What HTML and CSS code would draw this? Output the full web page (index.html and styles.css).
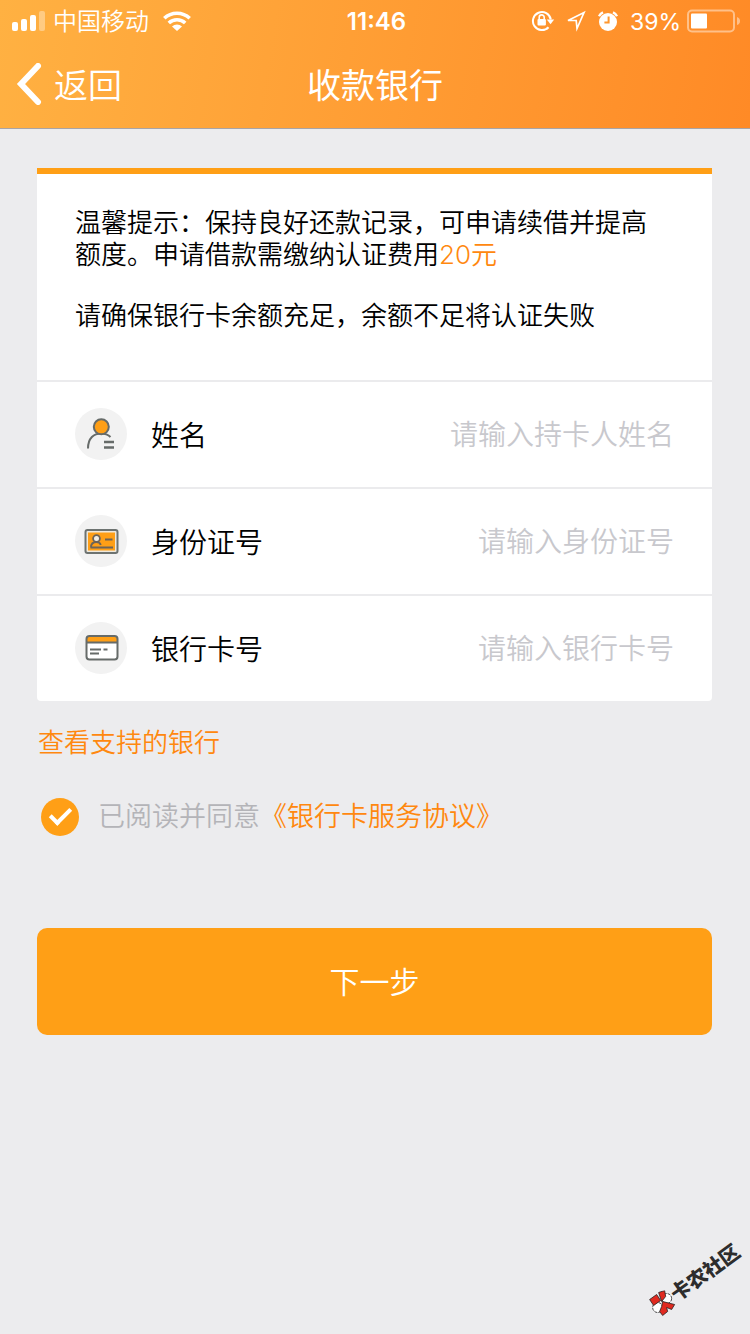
FILE: index.html
```html
<!DOCTYPE html>
<html lang="zh-CN">
<head>
<meta charset="utf-8">
<meta name="viewport" content="width=device-width, initial-scale=1">
<title>收款银行</title>
<link rel="stylesheet" href="styles.css">
</head>
<body>
<div class="page">
  <header class="header">
    <div class="status">
      <div class="status-left">
        <svg width="34" height="22" viewBox="0 0 34 22" fill="#fff" aria-hidden="true"><rect x="0" y="12" width="6" height="9" rx="2"/><rect x="9" y="9" width="6" height="12" rx="2"/><rect x="18" y="5" width="6" height="16" rx="2"/><rect x="27" y="1" width="6" height="20" rx="2" opacity=".35"/></svg>
        <span class="carrier">中国移动</span>
        <svg class="wifi" width="28" height="22" viewBox="0 0 28 22" aria-hidden="true"><g fill="none" stroke="#fff" stroke-width="3.6"><path d="M1.3 8.3a18.5 18.5 0 0 1 25.4 0"/><path d="M5.8 13a12 12 0 0 1 16.4 0"/></g><path d="M9 16.4a7.2 7.2 0 0 1 10 0L14 21z" fill="#fff"/></svg>
      </div>
      <span class="time">11:46</span>
      <div class="status-right">
        <svg width="24" height="22" viewBox="0 0 24 22" aria-hidden="true"><path d="M19.8 9.5A9 9 0 1 0 17.5 17.2" fill="none" stroke="#fff" stroke-width="2"/><path d="M15.8 9.6h7.4l-3.7 4.6z" fill="#fff"/><rect x="6.5" y="9" width="8.4" height="6.6" rx="1" fill="#fff"/><path d="M8.2 9V7.4a2.500 2.500 0 0 1 5 0V9" fill="none" stroke="#fff" stroke-width="1.6"/></svg>
        <svg width="20" height="22" viewBox="0 0 20 22" aria-hidden="true"><path d="M2 10.500L18 2.500l-7 16-.8-8z" fill="none" stroke="#fff" stroke-width="1.7"/></svg>
        <svg width="22" height="22" viewBox="0 0 22 22" aria-hidden="true"><circle cx="11" cy="12" r="9" fill="#fff"/><path d="M2 6.200A9 9 0 0 1 6 2.400M16 2.400a9 9 0 0 1 4 3.800" fill="none" stroke="#fff" stroke-width="2.400"/><path d="M11.600 6.500v6H7.400" fill="none" stroke="#ff972e" stroke-width="2"/></svg>
        <span class="percent">39%</span>
        <svg class="battery" width="54" height="24" viewBox="0 0 54 24" aria-hidden="true"><rect x="1" y="1.5" width="46" height="21" rx="4" fill="none" stroke="#fff" stroke-opacity=".45" stroke-width="2"/><rect x="4" y="4.500" width="16" height="15" rx="1" fill="#fff"/><path d="M50 8q3 1 3 4t-3 4z" fill="#fff" opacity=".45"/></svg>
      </div>
    </div>
    <nav class="nav">
      <button class="back" type="button"><svg width="26" height="42" viewBox="0 0 26 42" aria-hidden="true"><path d="M22 3L5 21l17 18" fill="none" stroke="#fff" stroke-width="6" stroke-linecap="round"/></svg><span>返回</span></button>
      <h1 class="title">收款银行</h1>
    </nav>
  </header>

  <main class="main">
    <form>
      <section class="card">
        <div class="notice">
          <p>温馨提示：保持良好还款记录，可申请续借并提高<br>额度。申请借款需缴纳认证费用<span class="fee">20元</span></p>
          <p>请确保银行卡余额充足，余额不足将认证失败</p>
        </div>
        <div class="field">
          <svg class="field-icon" viewBox="0 0 52 52" aria-hidden="true"><circle cx="26" cy="26" r="26" fill="#f2f2f2"/><g fill="none" stroke="#666b69" stroke-width="2"><path d="M13 40.500C13 30 19 25.500 26 25.500c4 0 7 1 9.500 3.500"/><circle cx="26.300" cy="18.800" r="7.500" fill="#ff9f16"/><path d="M29 34h10M29 39.500h10" stroke-width="2.400"/></g></svg>
          <label for="name">姓名</label>
          <input id="name" type="text" placeholder="请输入持卡人姓名">
        </div>
        <div class="field">
          <svg class="field-icon" viewBox="0 0 52 52" aria-hidden="true"><circle cx="26" cy="26" r="26" fill="#f2f2f2"/><rect x="10.500" y="15" width="32" height="23" rx="2" fill="#eee8dc" stroke="#6d7371" stroke-width="2"/><rect x="13" y="17.500" width="27" height="18" fill="#ff9f16"/><g fill="none" stroke="#6d6458" stroke-width="1.800"><circle cx="21.500" cy="23.500" r="3.400" fill="#f2eee6"/><path d="M16 32.500c0-3.500 2-5.500 5.500-5.500 2.500 0 3.800 1.500 4.300 3M15.500 32.500H38M30 24.500h7.500"/></g></svg>
          <label for="idno">身份证号</label>
          <input id="idno" type="text" placeholder="请输入身份证号">
        </div>
        <div class="field">
          <svg class="field-icon" viewBox="0 0 52 52" aria-hidden="true"><circle cx="26" cy="26" r="26" fill="#f2f2f2"/><rect x="11.500" y="14" width="31" height="23.500" rx="3" fill="#fff"/><path d="M12 20v-3q0-3 3-3h24q3 0 3 3v3z" fill="#ff9f16"/><g fill="none" stroke="#666b69" stroke-width="2"><rect x="11.500" y="14" width="31" height="23.500" rx="3"/><path d="M12 20.500h30M15 27.500h11M28.500 27.500h4M15 31.500h9"/></g></svg>
          <label for="cardno">银行卡号</label>
          <input id="cardno" type="text" placeholder="请输入银行卡号">
        </div>
      </section>
      <a class="banks" href="#">查看支持的银行</a>
      <div class="agree">
        <input class="check" id="agree" type="checkbox" checked>
        <label for="agree">已阅读并同意</label><a href="#">《银行卡服务协议》</a>
      </div>
      <button class="next" type="submit">下一步</button>
    </form>
  </main>

  <div class="watermark">
    <svg width="28" height="28" viewBox="0 3 28 28" aria-hidden="true"><g stroke="#222" stroke-width=".8"><g fill="#fff" stroke-dasharray="3 1"><circle cx="19" cy="11" r="5"/><circle cx="10" cy="20" r="5"/></g><path d="M2 12l7-5 4 6-7 5zM11 5l6-2 1 6-4 5zM15 14l12 3-3 5-5-2 1 4-5 4-3-4 2-5z" fill="#e02a20"/></g></svg>
    <span>卡农社区</span>
  </div>
</div>
</body>
</html>
```
FILE: styles.css
```css
* { box-sizing: border-box; }

body {
  margin: 0;
  background: #ececee;
  color: #000;
  font-family: "Liberation Sans", "Noto Sans CJK SC", sans-serif;
  font-weight: 350;
}

button, input {
  font-family: inherit;
  font-weight: inherit;
}

a { color: #ff880f; text-decoration: none; }
svg { display: block; flex: none; }

.page {
  position: relative;
  min-height: 100vh;
  overflow: hidden;
}

.header {
  color: #fff;
  background: linear-gradient(100deg, #ffb142, #ff8a26);
  border-bottom: 1px solid #a9a4a6;
}

.status, .nav {
  display: grid;
  grid-template-columns: 1fr auto 1fr;
  align-items: center;
}

.status {
  height: 40px;
  padding: 0 9px 0 12px;
  font-size: 24px;
  line-height: 40px;
}

.status-left, .status-right {
  display: flex;
  align-items: center;
}

.status-right { justify-content: flex-end; gap: 11px; }
.carrier { margin: 0 14px 0 7px; padding-top: 2px; }
.time, .percent { padding-top: 1px; font-family: Inter, sans-serif; }
.time { font-size: 24px; font-weight: 600; }
.percent { font-size: 23px; font-weight: 400; }
.battery { margin-left: -5px; }

.nav {
  height: 88px;
  padding: 0 16px;
}

.back {
  display: flex;
  align-items: center;
  gap: 12px;
  padding: 0;
  border: 0;
  background: none;
  color: inherit;
  font-size: 34px;
  line-height: 48px;
}

.back span, .title { padding-top: 4px; }

.title {
  margin: 0;
  font-size: 34px;
  font-weight: 400;
  line-height: 48px;
}

.main { padding: 39px 38px 40px 37px; }

.card {
  border-top: 6px solid #ff9f16;
  border-radius: 0 0 4px 4px;
  background: #fff;
}

.notice {
  padding: 34px 37px 48px 38px;
  font-size: 26px;
  line-height: 31px;
}

.notice p { margin: 0; }
.notice p + p { margin-top: 30px; }

.fee {
  color: #ff880f;
  font-family: Inter, "Noto Sans CJK SC", sans-serif;
}

.field {
  display: flex;
  align-items: center;
  height: 107px;
  padding: 0 38px 2px;
  border-top: 2px solid #ebebed;
  font-size: 28px;
  line-height: 40px;
}

.field label { padding-top: 6px; }

.field-icon {
  width: 52px;
  height: 52px;
  margin-right: 24px;
}

.field input {
  flex: 1;
  min-width: 0;
  height: 44px;
  padding: 4px 0 0;
  border: 0;
  outline: 0;
  background: none;
  font-size: 28px;
  line-height: 40px;
  text-align: right;
}

.field input::placeholder { color: #c8c8cd; }

.banks {
  display: block;
  width: fit-content;
  margin-top: 22px;
  padding-left: 1px;
  font-size: 26px;
  line-height: 40px;
}

.agree {
  display: flex;
  align-items: center;
  margin-top: 33px;
  padding-left: 4px;
  font-size: 27px;
  line-height: 42px;
}

.agree label { color: #b4b4b8; }

.check {
  display: grid;
  place-items: center;
  flex: none;
  appearance: none;
  width: 38px;
  height: 38px;
  margin: 0 19px 0 0;
  border-radius: 50%;
  background: #c8c8cd;
}

.check:checked { background: #ff9f16; }

.check:checked::before {
  content: "";
  width: 17px;
  height: 8px;
  margin-bottom: 6px;
  border: solid #fff;
  border-width: 0 0 4px 4px;
  transform: rotate(-45deg);
}

.next {
  display: block;
  width: 100%;
  height: 107px;
  margin-top: 90px;
  padding-bottom: 5px;
  border: 0;
  border-radius: 10px;
  background: #ff9f16;
  color: #fff;
  font-size: 30px;
}

.watermark {
  position: absolute;
  right: 2px;
  bottom: 39px;
  display: flex;
  align-items: center;
  color: #2d2d2d;
  font-size: 20px;
  font-weight: 900;
  line-height: 28px;
  transform: rotate(-36deg);
}

.watermark svg { transform: rotate(36deg); }
```
